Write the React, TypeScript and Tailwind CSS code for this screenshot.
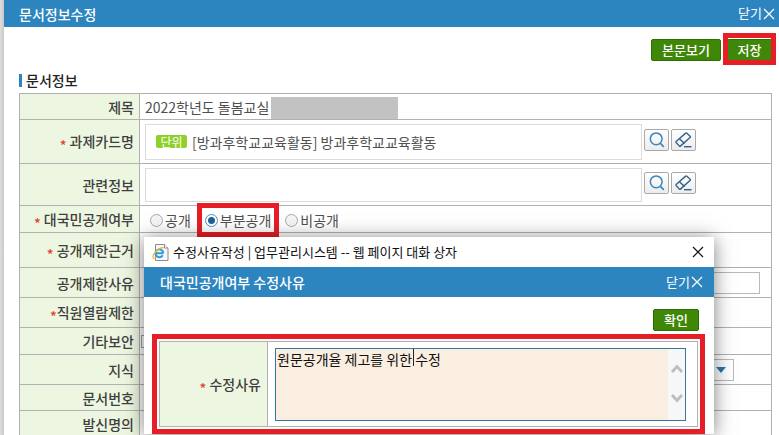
import { useState, type ReactNode } from "react";
import clsx from "clsx";

const disclosureOptions = [
  { id: "open", label: "공개" },
  { id: "partial", label: "부분공개" },
  { id: "closed", label: "비공개" }
];

function Required() {
  return <span className="align-sub leading-none text-[#e0452c]">*</span>;
}

function CloseIcon({ className }: { className?: string }) {
  return (
    <svg viewBox="0 0 12 12" className={clsx("size-3 shrink-0", className)} aria-hidden="true">
      <path d="M1 1l10 10M11 1L1 11" fill="none" stroke="currentColor" strokeWidth="1.2" />
    </svg>
  );
}

function SearchIcon() {
  return (
    <svg viewBox="0 0 16 16" className="size-4" aria-hidden="true">
      <circle cx="7.2" cy="6.8" r="5.9" fill="none" stroke="#3a86bd" strokeWidth="1.5" />
      <path d="M11.2 11.2l3.6 3.6" stroke="#3a86bd" strokeWidth="1.7" />
    </svg>
  );
}

function EraserIcon() {
  return (
    <svg viewBox="0 0 17 16" className="h-4 w-[17px]" aria-hidden="true">
      <g fill="none" stroke="#35628c" strokeWidth="1.4" strokeLinejoin="round">
        <path d="M10.4 1.4L1.4 9.3q-.7.7-.1 1.400l2.900 3.200q.7.700 1.500 0l9.300-8.300q.8-.7.100-1.400l-3.200-2.900q-.7-.6-1.500.100z" />
        <path d="M4.400 6.700l5.200 4.800" />
        <path d="M9 14.700h7.500" />
      </g>
    </svg>
  );
}

function BrowserIcon() {
  return (
    <svg viewBox="0 0 17 17" className="size-[17px] shrink-0" aria-hidden="true">
      <path d="M3.5.5h9l3.5 3.5v12.500h-12.500z" fill="#f8f8f8" stroke="#8b8b8b" />
      <path d="M12.500.5v3.500h3.500" fill="#fff" stroke="#8b8b8b" />
      <path
        d="M11.200 9.300H3.800M10.800 11.200a3.900 3.900 0 1 1 .5-1.900"
        fill="none"
        stroke="#2c9be0"
        strokeWidth="2"
      />
      <path
        d="M11.800 4.200c-.8-1.400-4-.4-6.800 2.200C1.800 9.300.2 12.600 1.300 13.800c.6.600 1.800.3 3-.4"
        fill="none"
        stroke="#f0b92b"
        strokeWidth="1.300"
      />
    </svg>
  );
}

function GreenButton({ children, className }: { children: ReactNode; className?: string }) {
  return (
    <button
      type="button"
      className={clsx(
        "flex h-[22px] items-center justify-center rounded-xs border border-[#2f6d05] bg-[#3f8708] text-[13px] font-medium text-white",
        className
      )}
    >
      {children}
    </button>
  );
}

function LookupButtons({ label }: { label: string }) {
  const button =
    "flex h-[22px] w-[25px] items-center justify-center rounded-xs border border-[#a9a9a9] bg-linear-to-b from-white to-[#ececec]";

  return (
    <div className="flex gap-0.5 pb-1">
      <button type="button" aria-label={`${label} 검색`} className={button}>
        <SearchIcon />
      </button>
      <button type="button" aria-label={`${label} 지우기`} className={button}>
        <EraserIcon />
      </button>
    </div>
  );
}

function Row({
  label,
  height,
  children
}: {
  label: ReactNode;
  height: string;
  children?: ReactNode;
}) {
  return (
    <tr className={height}>
      <th
        scope="row"
        className="w-[120px] border-r border-b border-[#b1b1b1] bg-[#edf6e0] p-0 pr-[5px] text-right font-medium text-[#404040]"
      >
        {label}
      </th>
      <td className="border-r border-b border-[#b1b1b1] p-0 pl-[5px]">{children}</td>
    </tr>
  );
}

function ReasonDialog() {
  return (
    <div
      role="dialog"
      aria-label="수정사유작성"
      className="absolute top-[237px] right-[65px] left-36 bg-white shadow-[0_2px_18px_rgba(0,0,0,0.5)]"
    >
      <div className="flex h-[30px] items-center gap-1 pr-2.5 pl-2 text-[13px] text-[#111]">
        <BrowserIcon />
        <span className="flex-1">수정사유작성 | 업무관리시스템 -- 웹 페이지 대화 상자</span>
        <button type="button" aria-label="대화 상자 닫기">
          <CloseIcon />
        </button>
      </div>
      <div className="flex h-[30px] items-center justify-between bg-[#2d85bf] pr-[11px] pl-4 text-white">
        <h2 className="font-medium">대국민공개여부 수정사유</h2>
        <button type="button" className="flex items-center gap-px text-[13px]">
          닫기
          <CloseIcon />
        </button>
      </div>
      <div className="flex justify-end pt-3 pr-[15px] pb-[3px]">
        <GreenButton className="w-[46px]">확인</GreenButton>
      </div>
      <div className="mr-[9px] ml-2 border-[5px] border-[#e61e25] p-0.5">
        <table className="w-full border-separate border-spacing-0 border-t border-l border-[#b1b1b1]">
          <tbody>
            <tr className="h-[85px]">
              <th
                scope="row"
                className="w-[108px] border-r border-b border-[#b1b1b1] bg-[#edf6e0] p-0 pr-1.5 text-right font-medium text-[#404040]"
              >
                <Required /> <label htmlFor="reason">수정사유</label>
              </th>
              <td className="border-r border-b border-[#b1b1b1] p-0 pr-[11px] pl-[7px]">
                <div className="relative flex h-[73px] border border-[#35789f] bg-[#faeee1]">
                  <textarea
                    id="reason"
                    defaultValue="원문공개율 제고를 위한 수정"
                    className="min-w-0 flex-1 resize-none overflow-hidden bg-transparent pl-px leading-5 text-[#111] outline-none"
                  />
                  <span className="absolute top-0 left-[137px] h-[17px] w-px bg-[#222]" />
                  <div className="flex w-[17px] flex-col items-center justify-center gap-[19px] bg-[#f7f7f7] pb-px">
                    <svg viewBox="0 0 12 10" className="h-2.5 w-3" aria-hidden="true">
                      <path d="M1 8l5-5.500L11 8" fill="none" stroke="#bdbdbd" strokeWidth="2.800" />
                    </svg>
                    <svg viewBox="0 0 12 10" className="h-2.5 w-3" aria-hidden="true">
                      <path d="M1 2l5 5.500L11 2" fill="none" stroke="#bdbdbd" strokeWidth="2.800" />
                    </svg>
                  </div>
                </div>
              </td>
            </tr>
          </tbody>
        </table>
      </div>
    </div>
  );
}

export default function App() {
  const [disclosure, setDisclosure] = useState("partial");

  return (
    <div className="relative flex h-screen overflow-hidden bg-white font-['Noto_Sans_CJK_KR',sans-serif] text-sm text-[#505050]">
      <div className="w-1 shrink-0 bg-linear-to-r from-[#dedede] to-[#c9c9c9]" />
      <main className="min-w-0 flex-1">
        <header className="flex h-[27px] items-center justify-between bg-[#2d85bf] pr-1 pl-[15px] text-white">
          <h1 className="font-medium">문서정보수정</h1>
          <button type="button" className="flex items-center gap-px text-[13px]">
            닫기
            <CloseIcon />
          </button>
        </header>

        <div className="pt-3 pr-[7px] pl-[15px]">
          <div className="flex justify-end gap-1.5">
            <GreenButton className="w-[70px]">본문보기</GreenButton>
            <div className="relative">
              <GreenButton className="w-[45px]">저장</GreenButton>
              <span className="pointer-events-none absolute -top-1.5 -right-1 -bottom-1 -left-1 border-[5px] border-[#e61e25]" />
            </div>
          </div>

          <div className="flex h-8 items-center gap-1 pt-1.5">
            <span className="h-[13px] w-[3px] bg-[#2d85bf]" />
            <h2 className="font-medium text-[#222]">문서정보</h2>
          </div>

          <table className="w-full border-separate border-spacing-0 border-t border-l border-[#b1b1b1]">
            <tbody>
              <Row label="제목" height="h-[26px]">
                <div className="flex h-[25px] items-center gap-0.5">
                  2022학년도 돌봄교실
                  <span className="h-[22px] w-[127px] self-end bg-[#c2c2c2]" />
                </div>
              </Row>
              <Row label={<><Required /> 과제카드명</>} height="h-11">
                <div className="flex items-center gap-0.5 pr-[75px]">
                  <div className="flex h-9 min-w-0 flex-1 items-center gap-[5px] border border-[#dcdcdc] pl-2.5">
                    <span className="flex h-[13px] w-[31px] items-center justify-center rounded-xs bg-[#8fd02b] text-xs text-white">
                      단위
                    </span>
                    <span>[방과후학교교육활동] 방과후학교교육활동</span>
                  </div>
                  <LookupButtons label="과제카드명" />
                </div>
              </Row>
              <Row label={<label htmlFor="related">관련정보</label>} height="h-[42px]">
                <div className="flex items-center gap-0.5 pr-[75px]">
                  <input
                    id="related"
                    type="text"
                    className="h-[34px] min-w-0 flex-1 border border-[#dcdcdc] px-2.5 outline-none"
                  />
                  <LookupButtons label="관련정보" />
                </div>
              </Row>
              <Row label={<><Required /> 대국민공개여부</>} height="h-[27px]">
                <div className="flex items-center gap-3.5 pt-0.5 pl-[5px]">
                  {disclosureOptions.map((option) => (
                    <label key={option.id} className="relative flex items-center gap-0.5 leading-5">
                      <input
                        type="radio"
                        name="disclosure"
                        checked={disclosure === option.id}
                        onChange={() => setDisclosure(option.id)}
                        className="size-[13px] appearance-none rounded-full border border-[#a8a8a8] bg-[#f4f4f4] checked:border-[#4d93c4] checked:bg-[radial-gradient(circle,#1b6198_3px,#ffffff_4px)]"
                      />
                      {option.label}
                      {option.id === "partial" ? (
                        <span className="pointer-events-none absolute -inset-x-2 -inset-y-[7px] border-[5px] border-[#e61e25]" />
                      ) : null}
                    </label>
                  ))}
                </div>
              </Row>
              <Row label={<><Required /> 공개제한근거</>} height="h-[35px]" />
              <Row label={<label htmlFor="limit-reason">공개제한사유</label>} height="h-[30px]">
                <div className="flex pr-[11px]">
                  <input
                    id="limit-reason"
                    type="text"
                    className="h-[22px] min-w-0 flex-1 border border-[#b9b9b9] px-1 outline-none"
                  />
                </div>
              </Row>
              <Row label={<><Required />직원열람제한</>} height="h-[30px]" />
              <Row label={<label htmlFor="security">기타보안</label>} height="h-[27px]">
                <input
                  id="security"
                  type="checkbox"
                  className="-ml-1 block size-[13px] appearance-none border border-[#a0a0a0] bg-white"
                />
              </Row>
              <Row label={<label htmlFor="knowledge">지식</label>} height="h-[30px]">
                <div className="relative mr-[37px] flex">
                  <select
                    id="knowledge"
                    className="h-[22px] min-w-0 flex-1 appearance-none border border-[#b9b9b9] bg-white"
                  />
                  <svg
                    viewBox="0 0 10 6"
                    className="pointer-events-none absolute top-2 right-2 h-1.5 w-2.5"
                    aria-hidden="true"
                  >
                    <path d="M0 0h10L5 6z" fill="#2878b0" />
                  </svg>
                </div>
              </Row>
              <Row label="문서번호" height="h-[26px]" />
              <Row label="발신명의" height="h-[26px]" />
            </tbody>
          </table>
        </div>
      </main>

      <ReasonDialog />
    </div>
  );
}
